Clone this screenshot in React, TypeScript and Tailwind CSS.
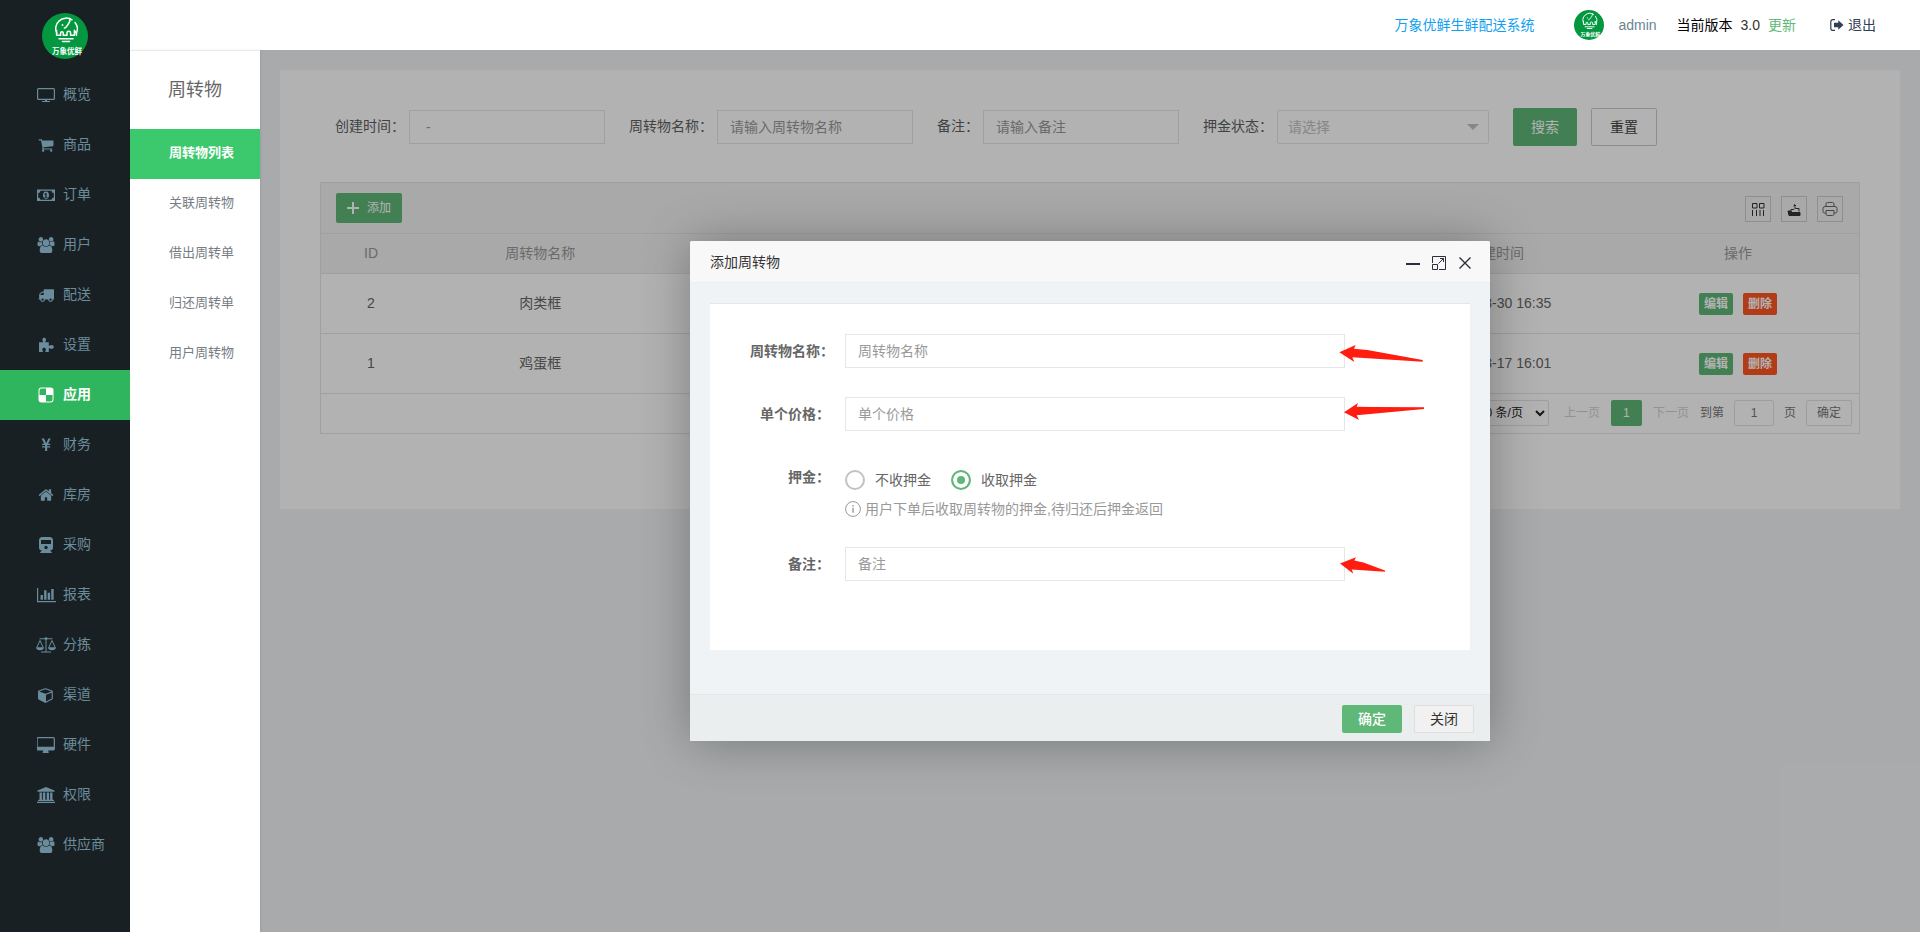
import type { ReactNode } from "react"

const FONT = "font-['Liberation_Sans','Noto_Sans_CJK_SC',sans-serif]"

const Logo = ({ className }: { className: string }) => (
    <svg viewBox="0 0 46 46" className={className} role="img" aria-label="logo">
        <circle cx="23" cy="23" r="23" fill="#039840" />
        <g fill="none" stroke="#fff" strokeWidth="1.5" strokeLinecap="round" strokeLinejoin="round">
            <path d="M14.8 20.500A10.600 10.600 0 0 1 30 6.800M33 9.500A10.600 10.600 0 0 1 34.600 20" />
            <path d="M14.600 17.500v4.800h4v-2.600c0-1.400 2.600-1.400 2.600 0v2.600h3.800v-2.600c0-1.800 3.600-1.800 3.600 0v2.600h3.800v-5l2 3v2" />
            <path d="M28 5.500c.6 2.600-.6 4.200-2.200 6.200-1.400 1.800-1.600 3.200-3.400 3.400" />
            <path d="M17 25.800h14" />
            <path d="M20.500 28.400h7" />
        </g>
        <circle cx="20.500" cy="12" r="0.900" fill="#fff" />
        <text x="25" y="40.500" textAnchor="middle" fontSize="7.500" fontWeight="700" fill="#fff">万象优鲜</text>
    </svg>
)

const Icon = ({ box, w, children }: { box: string; w: number; children: ReactNode }) => (
    <svg viewBox={box} width={w} height={16} fill="currentColor" aria-hidden="true">{children}</svg>
)

const usersIcon = (
    <Icon box="0 0 1920 1792" w={18}>
        <path d="M593 896q-162 5-265 128h-134q-82 0-138-40.5t-56-118.500q0-353 124-353 6 0 43.500 21t97.500 42.500 119 21.500q67 0 133-23-5 37-5 66 0 159 81 301zm1071 637q0 120-73 189.500t-194 69.500h-874q-121 0-194-69.500t-73-189.500q0-53 3.500-103.500t14-109 26.500-108.500 43-97.500 62-81 85.500-53.500 111.500-20q10 0 43 21.500t73 48 107 48 135 21.500 135-21.500 107-48 73-48 43-21.500q61 0 111.500 20t85.500 53.500 62 81 43 97.500 26.500 108.500 14 109 3.500 103.500zm-1024-1277q0 106-75 181t-181 75-181-75-75-181 75-181 181-75 181 75 75 181zm704 384q0 159-112.500 271.500t-271.500 112.500-271.500-112.500-112.500-271.500 112.500-271.500 271.500-112.500 271.500 112.500 112.500 271.500zm576 225q0 78-56 118.500t-138 40.500h-134q-103-123-265-128 81-142 81-301 0-29-5-66 66 23 133 23 59 0 119-21.500t97.500-42.500 43.500-21q124 0 124 353zm-128-609q0 106-75 181t-181 75-181-75-75-181 75-181 181-75 181 75 75 181z" />
    </Icon>
)

const menus = [
    {
        name: "概览", icon: (
            <Icon box="0 0 18 16" w={18}>
                <path fillRule="evenodd" d="M1.500 1h15A1.500 1.500 0 0 1 18 2.500v9a1.500 1.500 0 0 1-1.500 1.500H10v1h3v1H5v-1h3v-1H1.500A1.500 1.500 0 0 1 0 11.500v-9A1.500 1.500 0 0 1 1.500 1zM1.200 2.200v9.600h15.600V2.200z" />
            </Icon>
        )
    },
    {
        name: "商品", icon: (
            <Icon box="0 0 1792 1792" w={16}>
                <path d="M704 1536q0 52-38 90t-90 38-90-38-38-90 38-90 90-38 90 38 38 90zm896 0q0 52-38 90t-90 38-90-38-38-90 38-90 90-38 90 38 38 90zm128-1088v512q0 24-16.500 42.500t-40.500 21.500l-1044 122q13 60 13 70 0 16-24 64h920q26 0 45 19t19 45-19 45-45 19h-1024q-26 0-45-19t-19-45q0-11 8-31.500t16-36 21.500-40 15.500-29.500l-177-823h-204q-26 0-45-19t-19-45 19-45 45-19h256q16 0 28.500 6.500t19.500 15.500 13 24.500 8 26 5.500 29.500 4.500 26h1201q26 0 45 19t19 45z" />
            </Icon>
        )
    },
    {
        name: "订单", icon: (
            <Icon box="0 0 18 16" w={18}>
                <path fillRule="evenodd" d="M0 2.500h18v11.500H0zM3.500 3.700A2.500 2.500 0 0 1 1.200 6v4.500a2.500 2.500 0 0 1 2.300 2.300h11a2.500 2.500 0 0 1 2.300-2.300V6a2.500 2.500 0 0 1-2.300-2.300z" />
                <path fillRule="evenodd" d="M9 4.600c2 0 3 1.700 3 3.650S11 11.900 9 11.900s-3-1.700-3-3.650 1-3.650 3-3.650zM8.700 6l-1.300 1v.7h.9v2.300h-.9v.8h3.100V10h-.9V6z" />
            </Icon>
        )
    },
    { name: "用户", icon: usersIcon },
    {
        name: "配送", icon: (
            <Icon box="0 0 1792 1792" w={16}>
                <path d="M640 1408q0-52-38-90t-90-38-90 38-38 90 38 90 90 38 90-38 38-90zm-384-512h384v-256h-158q-13 0-22 9l-195 195q-9 9-9 22v30zm1280 512q0-52-38-90t-90-38-90 38-38 90 38 90 90 38 90-38 38-90zm256-1088v1024q0 15-4 26.500t-13.500 18.500-16.500 11.500-23.500 6-22.500 2-25.500 0-22.500-.5q0 106-75 181t-181 75-181-75-75-181h-384q0 106-75 181t-181 75-181-75-75-181h-64q-3 0-22.500.5t-25.500 0-22.500-2-23.500-6-16.500-11.500-13.500-18.500-4-26.500q0-26 19-45t45-19v-320q0-8-.5-35t0-38 2.500-34.500 6.500-37 14-30.500 22.500-30l198-198q19-19 50.500-32t58.500-13h160v-192q0-26 19-45t45-19h1024q26 0 45 19t19 45z" />
            </Icon>
        )
    },
    {
        name: "设置", icon: (
            <Icon box="0 0 16 16" w={16}>
                <path d="M1 5.300h4.300c-.2-1-.9-1.300-.9-2.600C4.400 1.400 5.200.8 6.200.8s1.800.6 1.800 1.900c0 1.300-.7 1.600-.9 2.600h3.700v3.700c.8-.1 1.400-.9 2.700-.9 1.500 0 2.300.8 2.300 1.900s-.8 1.800-2.300 1.800c-1.300 0-1.900-.7-2.700-.8V15H7.300c0-1 .6-1.300.6-2.500 0-1.100-.7-1.700-1.800-1.700s-1.800.6-1.800 1.700c0 1.200.7 1.500.7 2.500H1z" />
            </Icon>
        )
    },
    {
        name: "应用", active: true, icon: (
            <Icon box="0 0 16 16" w={16}>
                <path fillRule="evenodd" d="M3.500.5h9a3 3 0 0 1 3 3v9a3 3 0 0 1-3 3h-9a3 3 0 0 1-3-3v-9a3 3 0 0 1 3-3zM8 1.500H3.500a2 2 0 0 0-2 2V8H8zM8 8v6.500h4.500a2 2 0 0 0 2-2V8z" />
            </Icon>
        )
    },
    {
        name: "财务", icon: (
            <Icon box="0 0 16 16" w={16}>
                <path d="M3.500 1.500H6l2.200 4.800 2.200-4.800h2.400L10 6.800h2.200v1.200H9.200v1.200h3v1.200h-3V14H7.100v-3.600h-3V9.200h3V8h-3V6.800h2.200z" />
            </Icon>
        )
    },
    {
        name: "库房", icon: (
            <Icon box="0 0 1792 1792" w={16}>
                <path d="M1472 992v480q0 26-19 45t-45 19h-384v-384h-256v384h-384q-26 0-45-19t-19-45v-480q0-1 .5-3t.5-3l575-474 575 474q1 2 1 6zm223-69l-62 74q-8 9-21 11h-3q-13 0-21-7l-692-577-692 577q-12 8-24 7-13-2-21-11l-62-74q-8-10-7-23.500t11-21.500l719-599q32-26 76-26t76 26l244 204v-195q0-14 9-23t23-9h192q14 0 23 9t9 23v408l219 182q10 8 11 21.500t-7 23.500z" />
            </Icon>
        )
    },
    {
        name: "采购", icon: (
            <Icon box="0 0 16 16" w={16}>
                <path fillRule="evenodd" d="M4.500 0h7A3.500 3.500 0 0 1 15 3.500v7a3 3 0 0 1-3 3l1.800 1.700v.8H2.200v-.8L4 13.500a3 3 0 0 1-3-3v-7A3.500 3.500 0 0 1 4.500 0zM3 3v4h10V3zm5 5.800a1.700 1.700 0 1 0 0 3.400 1.700 1.700 0 0 0 0-3.400z" />
            </Icon>
        )
    },
    {
        name: "报表", icon: (
            <Icon box="0 128 2048 1536" w={19}>
                <path d="M640 896v512h-256v-512h256zm384-512v1024h-256v-1024h256zm1024 1152v128h-2048v-1536h128v1408h1920zm-640-896v768h-256v-768h256zm384-384v1152h-256v-1152h256z" />
            </Icon>
        )
    },
    {
        name: "分拣", icon: (
            <Icon box="0 0 20 16" w={20}>
                <path d="M9.500 1.600h1v13h-1zM3.500 1.200h13v1h-13zM5 14.600h10v1H5z" />
                <circle cx="10" cy="1.600" r="1.400" />
                <path fill="none" stroke="currentColor" d="M.8 10.500 4 3.500l3.200 7M12.800 10.500l3.200-7 3.200 7" />
                <path d="M0 10.200h8c0 2-1.800 3-4 3s-4-1-4-3zM12 10.200h8c0 2-1.800 3-4 3s-4-1-4-3z" />
            </Icon>
        )
    },
    {
        name: "渠道", icon: (
            <Icon box="0 0 1792 1792" w={16}>
                <path d="M896 1629l640-349v-636l-640 233v752zm-64-865l698-254-698-254-698 254zm832-252v768q0 35-18 65t-49 47l-704 384q-28 16-61 16t-61-16l-704-384q-31-17-49-47t-18-65v-768q0-40 23-73t61-47l704-256q22-8 44-8t44 8l704 256q38 14 61 47t23 73z" />
            </Icon>
        )
    },
    {
        name: "硬件", icon: (
            <Icon box="0 0 1856 1664" w={18}>
                <path d="M1728 992v-832q0-13-9.500-22.500t-22.500-9.500h-1600q-13 0-22.500 9.500t-9.500 22.500v832q0 13 9.500 22.500t22.500 9.500h1600q13 0 22.500-9.500t9.500-22.500zm128-832v1088q0 66-47 113t-113 47h-544q0 37 16 77.500t32 71 16 43.500q0 26-19 45t-45 19h-512q-26 0-45-19t-19-45q0-14 16-44t32-70 16-78h-544q-66 0-113-47t-47-113v-1088q0-66 47-113t113-47h1600q66 0 113 47t47 113z" />
            </Icon>
        )
    },
    {
        name: "权限", icon: (
            <Icon box="0 0 18 16" w={18}>
                <path d="M9 0l8.500 3.500v1.200H.5V3.500zM2.500 5.500h2.400v7.200h1V5.500h2.400v7.200h1.400V5.500h2.400v7.200h1V5.500h2.400v7.200h.8l.7.500v.9H1v-.9l.7-.5h.8zM0 14.800h18V16H0z" />
            </Icon>
        )
    },
    { name: "供应商", icon: usersIcon },
]

const subMenus = ["周转物列表", "关联周转物", "借出周转单", "归还周转单", "用户周转物"]

const rows = [
    { id: 2, name: "肉类框", time: "2022-08-30 16:35" },
    { id: 1, name: "鸡蛋框", time: "2022-08-17 16:01" },
]

const Sidebar = () => (
    <aside className="w-[130px] shrink-0 bg-[#192023]">
        <div className="flex h-[70px] justify-center pt-[13px]">
            <Logo className="h-[46px] w-[46px]" />
        </div>
        <nav>
            {menus.map((item) => (
                <a
                    key={item.name}
                    href="#"
                    className={`flex h-[50px] items-center gap-[7px] pl-9 text-sm ${item.active ? "bg-[#2fb55d] font-bold text-white" : "text-[#6b8c9c]"}`}
                >
                    <span className="flex w-5 justify-center">{item.icon}</span>
                    <span className="pb-0.5">{item.name}</span>
                </a>
            ))}
        </nav>
    </aside>
)

const Header = () => (
    <header className="flex h-[50px] items-center justify-end bg-white pr-11 text-sm">
        <a href="#" className="text-[#139ff0]">万象优鲜生鲜配送系统</a>
        <Logo className="ml-10 h-[30px] w-[30px]" />
        <span className="ml-3.5 text-[#6b8492]">admin</span>
        <span className="ml-5 text-black">当前版本</span>
        <span className="ml-2 text-[#333]">3.0</span>
        <a href="#" className="ml-2 text-[#5fb878]">更新</a>
        <a href="#" className="ml-[34px] flex items-center gap-1 text-[#2f4056]">
            <svg viewBox="0 0 14 12" width="14" height="12" fill="currentColor" aria-hidden="true">
                <path d="M5 0v1.200H3A1.600 1.600 0 0 0 1.400 2.800v6.400A1.600 1.600 0 0 0 3 10.800h2V12H3A2.800 2.800 0 0 1 .2 9.200V2.800A2.800 2.800 0 0 1 3 0z" />
                <path d="M8.300 1.200 13.500 6l-5.200 4.800V8.200H4V3.800h4.300z" />
            </svg>
            退出
        </a>
    </header>
)

const SubMenu = () => (
    <nav className="z-10 w-[130px] shrink-0 border-t border-[#eaeaea] bg-white shadow-[1px_0_2px_rgba(0,0,0,0.08)]">
        <h2 className="flex h-[78px] items-center pl-[38px] text-lg text-[#666]">周转物</h2>
        {subMenus.map((name, i) => (
            <a
                key={name}
                href="#"
                className={`flex h-[50px] items-center pb-0.5 pl-[39px] text-[13px] ${i === 0 ? "bg-[#3cc96d] font-bold text-white" : "text-[#777d84]"}`}
            >
                {name}
            </a>
        ))}
    </nav>
)

const FilterInput = ({ id, label, placeholder }: { id: string; label: string; placeholder: string }) => (
    <div className="flex items-center gap-1">
        <label htmlFor={id} className="pb-0.5">{label}</label>
        <input id={id} placeholder={placeholder} className="h-[34px] w-[196px] border border-[#e6e6e6] bg-white px-3 placeholder:text-[#999]" />
    </div>
)

const Filters = () => (
    <form className="flex items-center gap-6 pl-[15px] text-sm text-[#5f5f5f]">
        <FilterInput id="created" label="创建时间：" placeholder={"\u00a0-\u00a0"} />
        <FilterInput id="fname" label="周转物名称：" placeholder="请输入周转物名称" />
        <FilterInput id="fremark" label="备注：" placeholder="请输入备注" />
        <div className="flex items-center gap-1">
            <label htmlFor="state" className="pb-0.5">押金状态：</label>
            <div className="relative">
                <select id="state" className="h-[34px] w-[212px] appearance-none rounded-xs border border-[#e6e6e6] bg-white px-2.5 text-[#c2c2c2]">
                    <option>请选择</option>
                </select>
                <span className="pointer-events-none absolute top-3.5 right-2.5 border-x-6 border-t-6 border-x-transparent border-t-[#c2c2c2]" />
            </div>
        </div>
        <div className="flex gap-3.5">
            <button type="button" className="h-[38px] rounded-xs bg-[#5fb878] px-[18px] text-white">搜索</button>
            <button type="button" className="h-[38px] rounded-xs border border-[#c9c9c9] bg-white px-[18px] text-[#444]">重置</button>
        </div>
    </form>
)

const ToolButton = ({ label, children }: { label: string; children: ReactNode }) => (
    <button type="button" aria-label={label} className="flex h-[26px] w-[26px] items-center justify-center border border-[#ccc] text-[#333]">
        <svg viewBox="0 0 16 16" width="16" height="16" fill="none" stroke="currentColor" strokeWidth="1">{children}</svg>
    </button>
)

const Pager = () => (
    <div className="flex h-[39px] items-center justify-end pr-[7px] text-xs text-[#777]">
        <select aria-label="每页条数" className="h-[26px] rounded-xs border border-[#e2e2e2] bg-white pr-2 pl-0.5 text-[#222]">
            <option>10 条/页</option>
        </select>
        <button type="button" className="ml-[15px] text-[#d2d2d2]">上一页</button>
        <button type="button" className="ml-[11px] h-[26px] w-[31px] rounded-xs bg-[#5fb878] text-white">1</button>
        <button type="button" className="ml-[11px] text-[#d2d2d2]">下一页</button>
        <label htmlFor="page" className="ml-[11px]">到第</label>
        <input id="page" defaultValue="1" className="mx-2.5 h-[26px] w-10 rounded-xs border border-[#e2e2e2] bg-white text-center" />
        <span>页</span>
        <button type="button" className="ml-2.5 h-[26px] w-[46px] rounded-xs border border-[#e2e2e2] bg-white">确定</button>
    </div>
)

const List = () => (
    <div className="mt-9 border border-[#e6e6e6]">
        <div className="flex h-[51px] items-center justify-between border-b border-[#e6e6e6] bg-[#f2f2f2] pr-4 pl-[15px]">
            <button type="button" className="flex h-[30px] items-center gap-2 rounded-xs bg-[#5fb878] px-[11px] text-xs text-white">
                <svg viewBox="0 0 12 12" width="12" height="12" stroke="currentColor" strokeWidth="2" aria-hidden="true"><path d="M6 0v12M0 6h12" /></svg>
                添加
            </button>
            <div className="flex gap-2.5 pt-0.5">
                <ToolButton label="筛选列">
                    <path d="M2.500 2.500h4.500v4.500H2.500zM9.500 2.500H14v4.500H9.500zM2.500 9v6M6.500 9v6M10 9v6M13.500 9v6" />
                </ToolButton>
                <ToolButton label="导出">
                    <path fill="currentColor" d="M2 10h3l1 1.500h8V14.500H3z" />
                    <path d="M9 8V5.500M7.500 5h1V3.500L10 5M9.500 7.500H13v3M5 10V8.500h3" />
                </ToolButton>
                <ToolButton label="打印">
                    <g stroke="#666">
                        <path d="M4 5.500V3a1.500 1.500 0 0 1 1.500-1.500h5A1.500 1.500 0 0 1 12 3v2.500M4 12H2.500A1.500 1.500 0 0 1 1 10.500V7.500A2 2 0 0 1 3 5.500h10a2 2 0 0 1 2 2v3a1.500 1.500 0 0 1-1.500 1.500H12" />
                        <path d="M4 9.500h8V13a1.500 1.500 0 0 1-1.500 1.500h-5A1.500 1.500 0 0 1 4 13z" />
                    </g>
                </ToolButton>
            </div>
        </div>
        <table className="w-full table-fixed text-center text-sm text-[#666]">
            <thead>
                <tr className="h-[39px] border-b border-[#e6e6e6] bg-[#f2f2f2] text-[#999]">
                    <th className="w-[100px] font-normal">ID</th>
                    <th className="font-normal">周转物名称</th>
                    <td colSpan={3}></td>
                    <th className="w-[242px] font-normal">创建时间</th>
                    <th className="w-[242px] font-normal">操作</th>
                </tr>
            </thead>
            <tbody>
                {rows.map((row) => (
                    <tr key={row.id} className="h-[60px] border-b border-[#e6e6e6]">
                        <td>{row.id}</td>
                        <td>{row.name}</td>
                        <td colSpan={3}></td>
                        <td>{row.time}</td>
                        <td>
                            <div className="flex justify-center gap-2.5 pt-0.5 text-xs font-bold text-white">
                                <button type="button" className="h-[22px] rounded-xs bg-[#5fb878] px-[5px]">编辑</button>
                                <button type="button" className="h-[22px] rounded-xs bg-[#ff5722] px-[5px]">删除</button>
                            </div>
                        </td>
                    </tr>
                ))}
            </tbody>
        </table>
        <Pager />
    </div>
)

const Field = ({ id, label, children }: { id?: string; label: string; children: ReactNode }) => (
    <div className="flex items-start">
        <label htmlFor={id} className="w-[110px] shrink-0 px-[15px] text-right leading-[34px] font-bold whitespace-nowrap">{label}</label>
        <div className="relative w-[500px]">{children}</div>
    </div>
)

const inputClass = "block h-[34px] w-full border border-[#e6e6e6] bg-white px-3 placeholder:text-[#999]"
const radioClass = "h-5 w-5 appearance-none rounded-full border-2 border-[#c2c2c2] checked:border-[#5fb878] checked:bg-[#5fb878] checked:shadow-[inset_0_0_0_4px_#fff]"

const Dialog = () => (
    <div role="dialog" aria-label="添加周转物" className="flex w-[800px] flex-col rounded-xs bg-[#eff3f6] text-sm text-[#666] shadow-[1px_1px_50px_rgba(0,0,0,0.3)]">
        <div className="flex h-[42px] items-center justify-between rounded-t-xs border-b border-[#eee] bg-[#f8f8f8] pr-[18px] pl-5 text-[#333]">
            <span>添加周转物</span>
            <div className="flex items-center gap-3 pt-0.5 text-[#2e2d3c]">
                <button type="button" aria-label="最小化">
                    <svg viewBox="0 0 14 14" width="14" height="14" className="block" stroke="currentColor" strokeWidth="2"><path d="M0 8h14" /></svg>
                </button>
                <button type="button" aria-label="最大化">
                    <svg viewBox="0 0 14 14" width="14" height="14" className="block" fill="none" stroke="currentColor">
                        <path d="M.5 7V.5h13v13H7M.5 8.500h5v5h-5zM6.500 7.500 11.500 2.500M8 2.500h3.500V6" />
                    </svg>
                </button>
                <button type="button" aria-label="关闭窗口">
                    <svg viewBox="0 0 14 14" width="14" height="14" className="block" stroke="currentColor" strokeWidth="1.400"><path d="M1.500 1.500l11 11M12.500 1.500l-11 11" /></svg>
                </button>
            </div>
        </div>
        <div className="px-5 pt-5 pb-11">
            <form className="flex flex-col gap-[29px] border-t border-[#e3e7ea] bg-white pt-[30px] pb-[69px] pl-[25px]">
                <Field id="name" label="周转物名称：">
                    <input id="name" placeholder="周转物名称" className={inputClass} />
                    <svg viewBox="776 346 250 51" width="84" height="17" className="absolute top-[11px] -right-[78px]" fill="#ff1d0f" aria-hidden="true">
                        <path d="M776 368 825 346 820 357 860 361 1026 391V396L815 383 821 397z" />
                    </svg>
                </Field>
                <Field id="price" label="单个价格：">
                    <input id="price" placeholder="单个价格" className={inputClass} />
                    <svg viewBox="792 519 240 51" width="80" height="17" className="absolute top-[6px] -right-[79px]" fill="#ff1d0f" aria-hidden="true">
                        <path d="M792 547 834 519 830 530 880 531 1032 532V537L830 556 837 570z" />
                    </svg>
                </Field>
                <Field label="押金：">
                    <div className="flex h-10 items-center gap-5">
                        <label className="flex items-center gap-2.5"><input type="radio" name="deposit" className={radioClass} />不收押金</label>
                        <label className="flex items-center gap-2.5"><input type="radio" name="deposit" defaultChecked className={radioClass} />收取押金</label>
                    </div>
                    <p className="flex h-[18px] items-center gap-1 text-[#999]">
                        <svg viewBox="0 0 16 16" width="16" height="16" fill="none" stroke="currentColor" aria-hidden="true">
                            <circle cx="8" cy="8" r="7.400" />
                            <path d="M8 6.800v5M8 4v1.500" strokeWidth="1.400" />
                        </svg>
                        用户下单后收取周转物的押金,待归还后押金返回
                    </p>
                </Field>
                <Field id="remark" label="备注：">
                    <input id="remark" placeholder="备注" className={inputClass} />
                    <svg viewBox="780 982 135 50" width="45" height="17" className="absolute top-[10px] -right-[40px]" fill="#ff1d0f" aria-hidden="true">
                        <path d="M780 1001 828 982 823 992 850 998 915 1022V1026L815 1019 820 1032z" />
                    </svg>
                </Field>
            </form>
        </div>
        <div className="flex h-[47px] items-center justify-end gap-3 border-t border-[#e6e6e6] bg-[#eaeeef] pt-0.5 pr-4">
            <button type="button" className="h-7 w-[60px] rounded-xs bg-[#5fb878] font-medium text-white">确定</button>
            <button type="button" className="h-7 w-[60px] rounded-xs border border-[#dedede] bg-[#f1f1f1] text-[#333]">关闭</button>
        </div>
    </div>
)

export default function App() {
    return (
        <div className={`flex min-h-screen ${FONT}`}>
            <Sidebar />
            <div className="flex min-w-0 flex-1 flex-col">
                <Header />
                <div className="flex flex-1">
                    <SubMenu />
                    <main className="relative min-w-0 flex-1 bg-[#f2f4f6] p-5">
                        <div className="bg-white px-10 pt-[38px] pb-[75px]">
                            <Filters />
                            <List />
                        </div>
                        <div className="absolute inset-0 flex items-center justify-center bg-black/30">
                            <Dialog />
                        </div>
                    </main>
                </div>
            </div>
        </div>
    )
}
